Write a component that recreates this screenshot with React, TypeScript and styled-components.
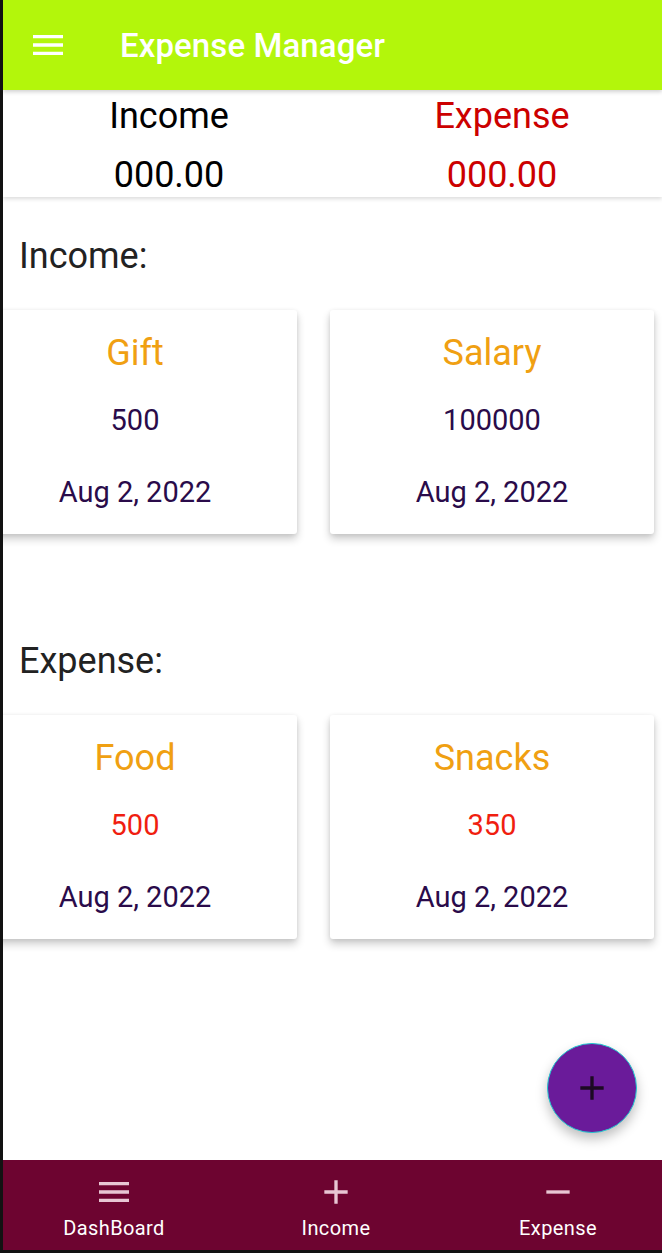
import styled, { createGlobalStyle } from "styled-components";

const GlobalStyle = createGlobalStyle`
  html, body {
    margin: 0;
    padding: 0;
    background: #121212;
  }
  body {
    font-family: Roboto, "Noto Sans", sans-serif;
  }
`;

const Screen = styled.div`
  margin-left: 3px;
  width: 659px;
  height: 1250px;
  display: flex;
  flex-direction: column;
  background: #ffffff;
  overflow: hidden;
`;

const AppBar = styled.header`
  position: relative;
  z-index: 2;
  height: 90px;
  flex-shrink: 0;
  display: flex;
  align-items: center;
  gap: 52px;
  padding-left: 25px;
  background: #b3f60b;
  box-shadow: 0 2px 4px rgba(0, 0, 0, 0.18);
`;

const Title = styled.h1`
  margin: 0;
  color: #ffffff;
  font-size: 33px;
  line-height: 39px;
  font-weight: 500;
  letter-spacing: 0.1px;
`;

const Summary = styled.section`
  position: relative;
  z-index: 1;
  display: grid;
  grid-template-columns: 332px 320px;
  column-gap: 7px;
  padding: 5px 0 0;
  height: 107px;
  box-sizing: border-box;
  background: #ffffff;
  box-shadow: 0 2px 4px rgba(0, 0, 0, 0.14);
`;

const SummaryColumn = styled.div<{ $color: string }>`
  display: flex;
  flex-direction: column;
  align-items: center;
  gap: 17px;
  color: ${(p) => p.$color};
  font-size: 36px;
  line-height: 42px;
`;

const Main = styled.main`
  position: relative;
  flex: 1;
  padding-top: 38px;
`;

const SectionLabel = styled.h2<{ $top?: number }>`
  margin: ${(p) => p.$top || 0}px 0 0;
  padding-left: 16px;
  font-size: 36px;
  line-height: 42px;
  font-weight: 400;
  color: #222222;
`;

const CardRow = styled.div<{ $top: number }>`
  display: flex;
  gap: 33px;
  margin-left: -30px;
  margin-top: ${(p) => p.$top}px;
`;

const Card = styled.div`
  width: 324px;
  height: 224px;
  flex-shrink: 0;
  box-sizing: border-box;
  padding-top: 22px;
  display: flex;
  flex-direction: column;
  align-items: center;
  background: #ffffff;
  border-radius: 3px;
  box-shadow: 0 5px 9px rgba(0, 0, 0, 0.2), 0 1px 4px rgba(0, 0, 0, 0.08);
`;

const CardTitle = styled.div`
  font-size: 36px;
  line-height: 42px;
  color: #f0a012;
`;

const CardAmount = styled.div<{ $color: string }>`
  margin-top: 29px;
  font-size: 29px;
  line-height: 35px;
  color: ${(p) => p.$color};
`;

const CardDate = styled.div`
  margin-top: 37px;
  font-size: 29px;
  line-height: 35px;
  color: #2a0b4a;
`;

const Fab = styled.button`
  position: absolute;
  right: 25px;
  bottom: 27px;
  width: 90px;
  height: 90px;
  padding: 0;
  border-radius: 50%;
  border: 1.5px solid #22c8d0;
  background: #6a1b9a;
  display: flex;
  align-items: center;
  justify-content: center;
  box-shadow: 0 6px 12px rgba(0, 0, 0, 0.25);
`;

const BottomNav = styled.nav`
  height: 90px;
  flex-shrink: 0;
  display: grid;
  grid-template-columns: repeat(3, 222px);
  background: #6d0430;
`;

const NavItem = styled.div`
  display: flex;
  flex-direction: column;
  align-items: center;
  padding-top: 12px;
  gap: 4px;
  color: #ffffff;
  font-size: 20px;
  line-height: 24px;
  letter-spacing: 0.4px;
  svg {
    fill: #e8c6d3;
  }
`;

const MenuIcon = ({ color = "#ffffff" }: { color?: string }) => (
  <svg width="40" height="40" viewBox="0 0 24 24" fill={color}>
    <path d="M3 18h18v-2H3v2zm0-5h18v-2H3v2zm0-7v2h18V6H3z" />
  </svg>
);

const PlusIcon = ({ size = 40, color }: { size?: number; color?: string }) => (
  <svg width={size} height={size} viewBox="0 0 24 24" fill={color}>
    <path d="M19 13h-6v6h-2v-6H5v-2h6V5h2v6h6v2z" />
  </svg>
);

const MinusIcon = () => (
  <svg width="40" height="40" viewBox="0 0 24 24">
    <path d="M19 13H5v-2h14v2z" />
  </svg>
);

const income = [
  { name: "Gift", amount: "500", date: "Aug 2, 2022" },
  { name: "Salary", amount: "100000", date: "Aug 2, 2022" },
];

const expense = [
  { name: "Food", amount: "500", date: "Aug 2, 2022" },
  { name: "Snacks", amount: "350", date: "Aug 2, 2022" },
];

export default function App() {
  return (
    <>
      <GlobalStyle />
      <Screen>
        <AppBar>
          <MenuIcon />
          <Title>Expense Manager</Title>
        </AppBar>

        <Summary>
          <SummaryColumn $color="#000000">
            <span>Income</span>
            <span>000.00</span>
          </SummaryColumn>
          <SummaryColumn $color="#cc0000">
            <span>Expense</span>
            <span>000.00</span>
          </SummaryColumn>
        </Summary>

        <Main>
          <SectionLabel>Income:</SectionLabel>
          <CardRow $top={33}>
            {income.map((item) => (
              <Card key={item.name}>
                <CardTitle>{item.name}</CardTitle>
                <CardAmount $color="#2a0b4a">{item.amount}</CardAmount>
                <CardDate>{item.date}</CardDate>
              </Card>
            ))}
          </CardRow>

          <SectionLabel $top={106}>Expense:</SectionLabel>
          <CardRow $top={33}>
            {expense.map((item) => (
              <Card key={item.name}>
                <CardTitle>{item.name}</CardTitle>
                <CardAmount $color="#f01e10">{item.amount}</CardAmount>
                <CardDate>{item.date}</CardDate>
              </Card>
            ))}
          </CardRow>

          <Fab>
            <PlusIcon size={40} color="#1c0a22" />
          </Fab>
        </Main>

        <BottomNav>
          <NavItem>
            <MenuIcon color="#e8c6d3" />
            DashBoard
          </NavItem>
          <NavItem>
            <PlusIcon />
            Income
          </NavItem>
          <NavItem>
            <MinusIcon />
            Expense
          </NavItem>
        </BottomNav>
      </Screen>
    </>
  );
}
